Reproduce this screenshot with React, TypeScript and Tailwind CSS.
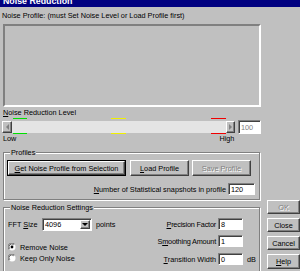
import React from "react";

const raised =
  "bg-[#c0c0c0] border border-t-white border-l-white border-r-[#404040] border-b-[#404040] shadow-[inset_-1px_-1px_0_#808080]";
const sunken =
  "bg-white border border-t-[#808080] border-l-[#808080] border-r-white border-b-white shadow-[inset_1px_1px_0_#404040]";

function Tri({ dir, color = "#000" }: { dir: "l" | "r" | "d"; color?: string }) {
  const pts = dir === "l" ? "3,0 3,6 0,3" : dir === "r" ? "0,0 0,6 3,3" : "0,0 6,0 3,3";
  const w = dir === "d" ? 6 : 3;
  const h = dir === "d" ? 3 : 6;
  return (
    <svg width={w} height={h} viewBox={`0 0 ${w} ${h}`}>
      <polygon points={pts} fill={color} />
    </svg>
  );
}

function Radio({ checked }: { checked?: boolean }) {
  return (
    <svg width="8" height="8" viewBox="0 0 8 8" className="shrink-0">
      <circle cx="4" cy="4" r="3.5" fill="#fff" />
      <path d="M1 6.5 A3.5 3.5 0 0 1 6.5 1" fill="none" stroke="#808080" strokeWidth="1" />
      <path d="M1.8 5.8 A2.6 2.6 0 0 1 5.8 1.8" fill="none" stroke="#404040" strokeWidth="0.8" />
      {checked && <circle cx="4" cy="4" r="1.4" fill="#000" />}
    </svg>
  );
}

export default function App() {
  return (
    <div className="w-[300px] h-[271px] overflow-hidden bg-[#c0c0c0] text-black text-[7.3px] leading-[9px] font-['Liberation_Sans',Arial,sans-serif] flex flex-col">
      <div className="h-[7px] shrink-0 overflow-hidden bg-[#000080]">
        <div className="-mt-[4px] ml-[3px] text-white font-bold text-[8.8px] leading-[10px] whitespace-nowrap">
          Noise Reduction
        </div>
      </div>
      <div className="flex flex-1 min-h-0">
        <div className="w-[264px] shrink-0 flex flex-col">
          <div className="mt-[4px] ml-[2px] h-[9px] whitespace-nowrap">
            Noise Profile: (must Set Noise Level or Load Profile first)
          </div>
          <div className="mt-[4px] ml-[3px] w-[258px] h-[83px] shrink-0 border-2 border-t-[#808080] border-l-[#808080] border-r-white border-b-white" />
          <div className="mt-[1px] ml-[3px] h-[9px]">
            <span className="underline">N</span>oise Reduction Level
          </div>
          <div className="relative ml-[2px] h-[17px] shrink-0 flex items-start">
            <div className="mt-[4px] w-[233px] h-[12px] flex">
              <div className={`${raised} w-[10px] h-full flex items-center justify-center`}>
                <Tri dir="l" color="#808080" />
              </div>
              <div className="flex-1 bg-[#e4e4e4]" />
              <div className={`${raised} w-[9px] h-full flex items-center justify-center`}>
                <Tri dir="r" color="#808080" />
              </div>
            </div>
            <div className={`${sunken} bg-[#c0c0c0] ml-[3px] mt-[3px] w-[23px] h-[14px] flex items-center pl-[2px] text-[#808080]`}>
              100
            </div>
            <div className="absolute left-[11px] top-[1px] w-[14px] h-[1px] bg-[#00e000]" />
            <div className="absolute left-[11px] top-[16px] w-[14px] h-[1px] bg-[#00e000]" />
            <div className="absolute left-[109px] top-[1px] w-[15px] h-[1px] bg-[#f0f000]" />
            <div className="absolute left-[109px] top-[16px] w-[15px] h-[1px] bg-[#f0f000]" />
            <div className="absolute left-[209px] top-[1px] w-[15px] h-[1px] bg-[#f00000]" />
            <div className="absolute left-[209px] top-[16px] w-[15px] h-[1px] bg-[#f00000]" />
          </div>
          <div className="h-[9px] flex shrink-0">
            <span className="ml-[3px]">Low</span>
            <span className="ml-[203px]">High</span>
          </div>

          <div className="relative mt-[9px] ml-[3px] w-[257px] h-[48px] shrink-0 border border-[#808080] shadow-[inset_1px_1px_0_#fff,1px_1px_0_#fff] pt-[7px] pl-[3px]">
            <span className="absolute -top-[5px] left-[6px] px-[1px] bg-[#c0c0c0]">Profiles</span>
            <div className="flex">
              <div className="border border-black">
                <div className={`${raised} w-[117px] h-[14px] flex items-center justify-center`}>
                  <span>
                    <span className="underline">G</span>et Noise Profile from Selection
                  </span>
                </div>
              </div>
              <div className={`${raised} ml-[4px] w-[59px] h-[16px] flex items-center justify-center`}>
                <span>
                  <span className="underline">L</span>oad Profile
                </span>
              </div>
              <div className={`${raised} ml-[3px] w-[59px] h-[16px] flex items-center justify-center text-[#808080] [text-shadow:1px_1px_0_#fff]`}>
                Save Profile
              </div>
            </div>
            <div className="mt-[7px] flex justify-end items-center pr-[4px]">
              <span className="whitespace-nowrap">
                <span className="underline">N</span>umber of Statistical snapshots in profile
              </span>
              <div className={`${sunken} ml-[2px] w-[27px] h-[12px] flex items-center pl-[2px]`}>120</div>
            </div>
          </div>

          <div className="relative mt-[7px] ml-[3px] w-[257px] h-[70px] shrink-0 border border-[#808080] shadow-[inset_1px_1px_0_#fff,1px_1px_0_#fff] flex">
            <span className="absolute -top-[5px] left-[6px] px-[1px] bg-[#c0c0c0]">Noise Reduction Settings</span>
            <div className="pl-[4px] pt-[10px] flex flex-col">
              <div className="h-[12px] flex items-center">
                <span className="w-[34px]">
                  FFT <span className="underline">S</span>ize
                </span>
                <div className={`${sunken} w-[50px] h-[13px] flex items-center justify-between pl-[2px] pr-[1px]`}>
                  <span>4096</span>
                  <div className={`${raised} w-[10px] h-[9px] flex items-center justify-center`}>
                    <Tri dir="d" />
                  </div>
                </div>
                <span className="ml-[4px]">points</span>
              </div>
              <div className="mt-[12px] h-[10px] flex items-center gap-[4px]">
                <Radio checked />
                <span>Remove Noise</span>
              </div>
              <div className="mt-[1px] h-[10px] flex items-center gap-[4px]">
                <Radio />
                <span>Keep Only Noise</span>
              </div>
            </div>
            <div className="ml-auto pt-[10px] flex flex-col">
              <div className="h-[12px] flex items-center">
                <span className="w-[70px] text-right tracking-[-0.2px]">
                  <span className="underline">P</span>recision Factor
                </span>
                <div className={`${sunken} ml-[2px] w-[25px] h-[12px] flex items-center pl-[2px]`}>8</div>
                <span className="w-[16px]" />
              </div>
              <div className="mt-[5px] h-[12px] flex items-center">
                <span className="w-[70px] text-right tracking-[-0.2px]">
                  S<span className="underline">m</span>oothing Amount
                </span>
                <div className={`${sunken} ml-[2px] w-[25px] h-[12px] flex items-center pl-[2px]`}>1</div>
                <span className="w-[16px]" />
              </div>
              <div className="mt-[6px] h-[12px] flex items-center">
                <span className="w-[70px] text-right">
                  <span className="underline">T</span>ransition Width
                </span>
                <div className={`${sunken} ml-[2px] w-[25px] h-[12px] flex items-center pl-[2px]`}>0</div>
                <span className="w-[16px] pl-[4px]">dB</span>
              </div>
            </div>
          </div>
        </div>

        <div className="flex flex-col pl-[3px] pt-[193px] gap-[4px]">
          <div className={`${raised} w-[33px] h-[14px] flex items-center justify-center text-[#808080] [text-shadow:1px_1px_0_#fff]`}>
            OK
          </div>
          <div className={`${raised} w-[33px] h-[14px] flex items-center justify-center`}>Close</div>
          <div className={`${raised} w-[33px] h-[14px] flex items-center justify-center`}>Cancel</div>
          <div className={`${raised} w-[33px] h-[15px] flex items-center justify-center`}>
            <span>
              <span className="underline">H</span>elp
            </span>
          </div>
        </div>
      </div>
    </div>
  );
}
